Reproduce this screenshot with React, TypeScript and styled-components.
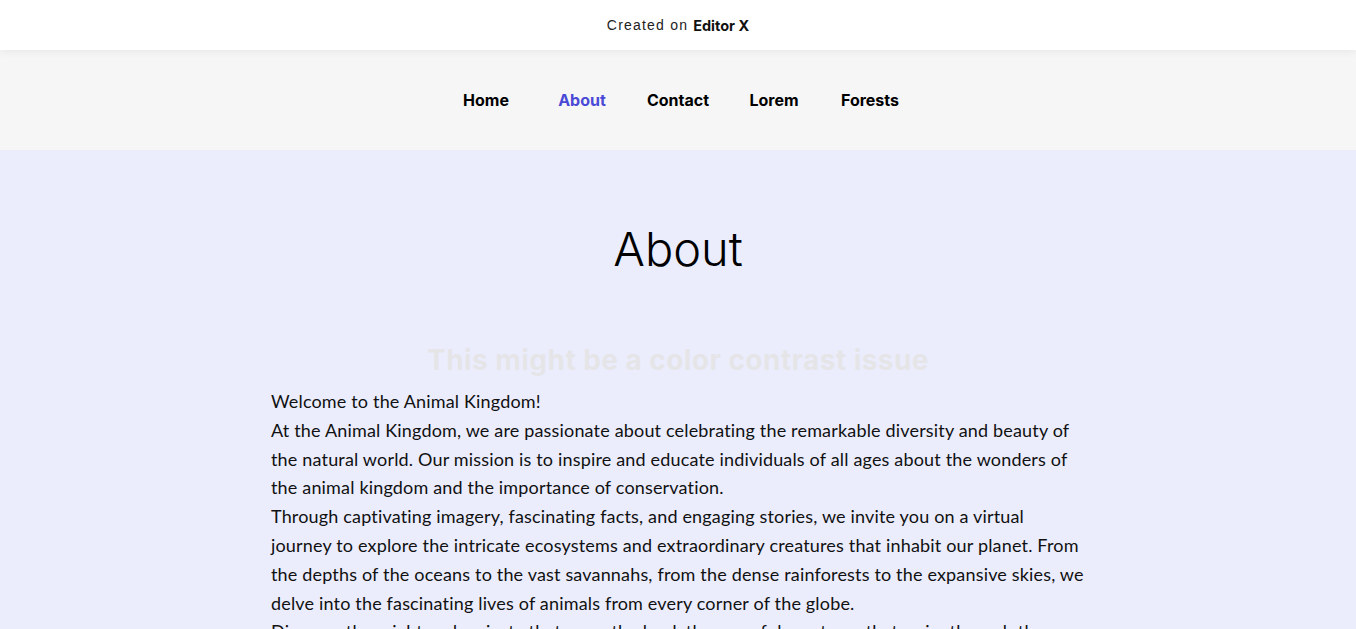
import React from "react";
import styled, { createGlobalStyle } from "styled-components";

const Global = createGlobalStyle`
  html, body { margin: 0; padding: 0; }
  body { background: #ebedfd; overflow: hidden; }
  * { box-sizing: border-box; }
`;

const Page = styled.div`
  display: flex;
  flex-direction: column;
  width: 100%;
  min-height: 629px;
`;

const TopBar = styled.div`
  height: 50px;
  background: #ffffff;
  display: flex;
  align-items: center;
  justify-content: center;
  position: relative;
  z-index: 2;
  box-shadow: 0 2px 8px rgba(0, 0, 0, 0.06);
  font-family: "Liberation Sans", Arial, sans-serif;
  font-size: 14px;
  letter-spacing: 1.2px;
  color: #222;
`;

const Brand = styled.span`
  font-family: Inter, "Liberation Sans", sans-serif;
  font-weight: 700;
  font-size: 14.5px;
  letter-spacing: 0;
  margin-left: 5px;
  color: #111;
`;

const NavBar = styled.nav`
  height: 100px;
  background: #f6f6f6;
  display: flex;
  align-items: center;
  justify-content: center;
  padding-bottom: 1px;
`;

const NavItem = styled.a<{ $active?: boolean }>`
  width: 96px;
  text-align: center;
  font-family: Inter, "Liberation Sans", sans-serif;
  font-weight: 700;
  font-size: 16px;
  color: ${(p) => (p.$active ? "#4a4ad6" : "#000000")};
  text-decoration: none;
`;

const Main = styled.main`
  flex: 1;
  background: #ebedfd;
  display: flex;
  flex-direction: column;
  align-items: center;
  padding-top: 70px;
`;

const Title = styled.h1`
  margin: 0;
  font-family: Inter, "Liberation Sans", sans-serif;
  font-weight: 300;
  font-size: 47px;
  line-height: 58px;
  color: #000;
`;

const Faded = styled.h2`
  margin: 62px 0 0 0;
  font-family: Inter, "Liberation Sans", sans-serif;
  font-weight: 700;
  font-size: 28px;
  letter-spacing: 0.45px;
  line-height: 40px;
  color: #e5e5e8;
`;

const Body = styled.div`
  width: 814px;
  margin-top: 7px;
  font-family: Lato, "Liberation Sans", sans-serif;
  font-size: 18px;
  letter-spacing: 0.17px;
  line-height: 28.8px;
  color: #111;
  white-space: nowrap;
`;

const P = styled.p`
  margin: 0;
`;

export default function App() {
  return (
    <Page>
      <Global />
      <TopBar>
        Created on<Brand>Editor X</Brand>
      </TopBar>
      <NavBar>
        <NavItem href="#">Home</NavItem>
        <NavItem href="#" $active>About</NavItem>
        <NavItem href="#">Contact</NavItem>
        <NavItem href="#">Lorem</NavItem>
        <NavItem href="#">Forests</NavItem>
      </NavBar>
      <Main>
        <Title>About</Title>
        <Faded>This might be a color contrast issue</Faded>
        <Body>
          <P>Welcome to the Animal Kingdom!</P>
          <P>
            At the Animal Kingdom, we are passionate about celebrating the remarkable diversity and beauty of
            <br />
            the natural world. Our mission is to inspire and educate individuals of all ages about the wonders of
            <br />
            the animal kingdom and the importance of conservation.
          </P>
          <P>
            Through captivating imagery, fascinating facts, and engaging stories, we invite you on a virtual
            <br />
            journey to explore the intricate ecosystems and extraordinary creatures that inhabit our planet. From
            <br />
            the depths of the oceans to the vast savannahs, from the dense rainforests to the expansive skies, we
            <br />
            delve into the fascinating lives of animals from every corner of the globe.
          </P>
          <P>
            Discover the might and majesty that roam the land, the graceful creatures that swim through the seas
          </P>
        </Body>
      </Main>
    </Page>
  );
}
